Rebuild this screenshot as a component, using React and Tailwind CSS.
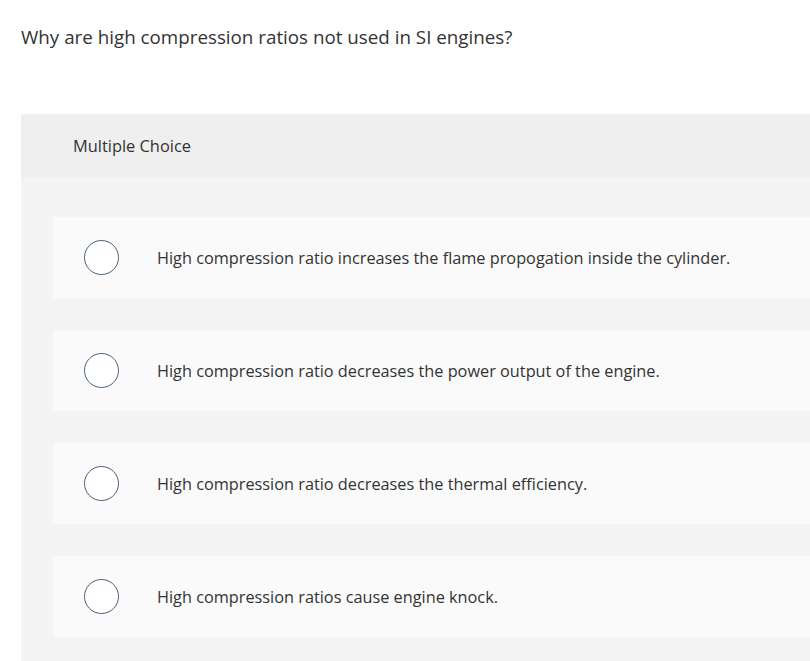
const OPTIONS = [
  'High compression ratio increases the flame propogation inside the cylinder.',
  'High compression ratio decreases the power output of the engine.',
  'High compression ratio decreases the thermal efficiency.',
  'High compression ratios cause engine knock.',
]

export default function App() {
  return (
    <div className="w-[810px] h-[661px] overflow-hidden bg-white text-[#333] font-['Open_Sans',sans-serif]">
      <div className="pl-[21px] pt-[24px] h-[114px]">
        <p className="text-[18.8px] leading-[26px]">Why are high compression ratios not used in SI engines?</p>
      </div>
      <div className="ml-[21px]">
        <div className="h-[64px] bg-[#efefef] flex items-center pl-[52px]">
          <span className="text-[16.4px]">Multiple Choice</span>
        </div>
        <div className="bg-[#f4f4f4] pt-[39px] pl-[32px] flex flex-col gap-[32px] pb-[40px]">
          {OPTIONS.map(text => (
            <label key={text} className="h-[81px] bg-[#fafafa] flex items-center cursor-pointer">
              <span className="ml-[31px] w-[35px] h-[35px] rounded-full border border-[#4a6278] bg-white shrink-0" />
              <span className="ml-[38px] pt-[2px] text-[16.3px]">{text}</span>
            </label>
          ))}
        </div>
      </div>
    </div>
  )
}
